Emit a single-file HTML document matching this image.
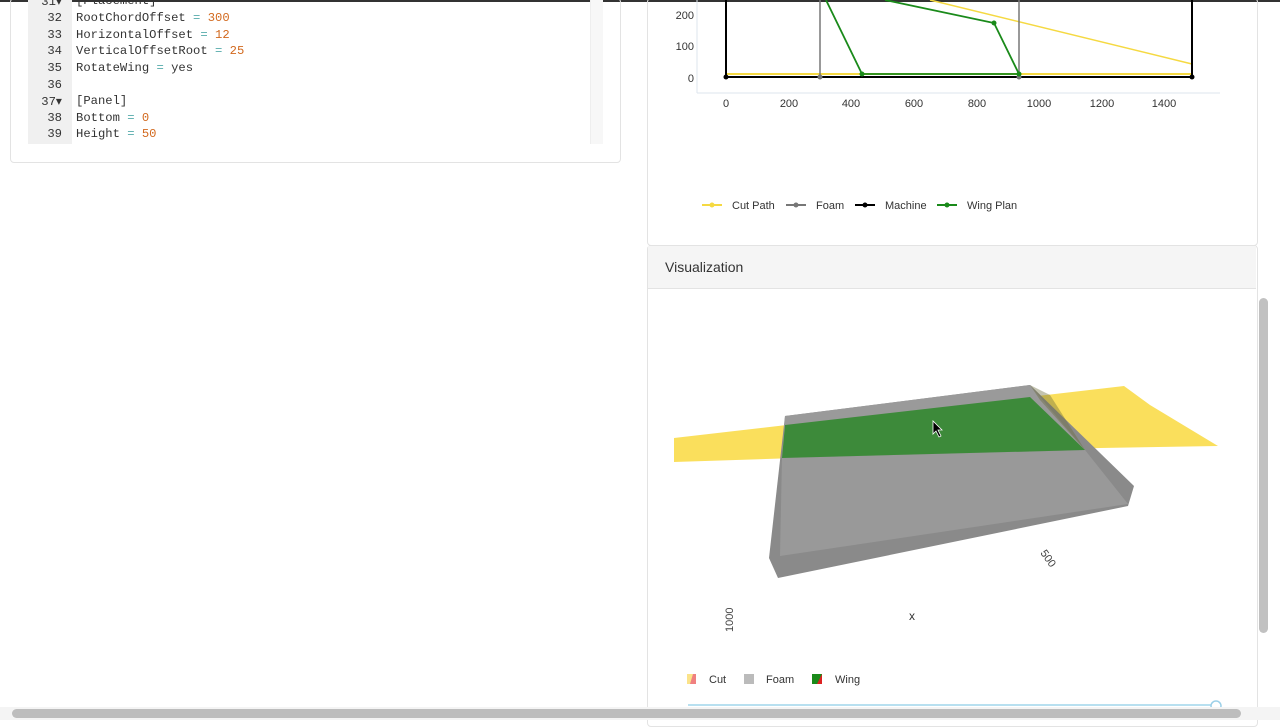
<!DOCTYPE html>
<html><head><style>
body{margin:0;width:1280px;height:720px;overflow:hidden;background:#fff;font-family:"Liberation Sans",sans-serif;position:relative}
.code{position:absolute;left:28px;top:0;width:574px;height:144px;font-family:"Liberation Mono",monospace;font-size:12.2px}
.gut{position:absolute;left:0;top:0;width:44px;height:144px;background:#f0f0f0}
.ln{position:absolute;left:0;width:34px;text-align:right;color:#333}
.tx{position:absolute;left:48px;color:#333;white-space:pre}
.n{color:#d2691e}.o{color:#5aa}
</style></head><body>
<div style="position:absolute;left:0;top:0;width:1280px;height:2px;background:#333"></div>
<div style="position:absolute;left:10px;top:-2px;width:609px;height:163px;border:1px solid #e3e3e3;border-radius:4px"></div>
<div class="code">
<div class="gut"></div>
<div style="position:absolute;left:562px;top:0;width:12px;height:144px;background:#f7f7f7;border-left:1px solid #eee"></div>
<div class="ln" style="top:-6px">31▾</div><div class="tx" style="top:-6px">[Placement]</div>
<div class="ln" style="top:11px">32</div><div class="tx" style="top:11px">RootChordOffset <span class="o">=</span> <span class="n">300</span></div>
<div class="ln" style="top:28px">33</div><div class="tx" style="top:28px">HorizontalOffset <span class="o">=</span> <span class="n">12</span></div>
<div class="ln" style="top:44px">34</div><div class="tx" style="top:44px">VerticalOffsetRoot <span class="o">=</span> <span class="n">25</span></div>
<div class="ln" style="top:61px">35</div><div class="tx" style="top:61px">RotateWing <span class="o">=</span> yes</div>
<div class="ln" style="top:78px">36</div>
<div class="ln" style="top:94px">37▾</div><div class="tx" style="top:94px">[Panel]</div>
<div class="ln" style="top:111px">38</div><div class="tx" style="top:111px">Bottom <span class="o">=</span> <span class="n">0</span></div>
<div class="ln" style="top:127px">39</div><div class="tx" style="top:127px">Height <span class="o">=</span> <span class="n">50</span></div>
</div>
<div style="position:absolute;left:647px;top:-2px;width:609px;height:246px;border:1px solid #e3e3e3;border-radius:4px"></div>
<svg style="position:absolute;left:0;top:0" width="1280" height="720" font-family="Liberation Sans,sans-serif">
<g font-size="11" fill="#333" text-anchor="end"><text x="694" y="19">200</text><text x="694" y="50">100</text><text x="694" y="82">0</text></g>
<g font-size="11" fill="#333" text-anchor="middle"><text x="726" y="107">0</text><text x="789" y="107">200</text><text x="851" y="107">400</text><text x="914" y="107">600</text><text x="977" y="107">800</text><text x="1039" y="107">1000</text><text x="1102" y="107">1200</text><text x="1164" y="107">1400</text></g>
<line x1="697" y1="0" x2="697" y2="93" stroke="#dde4ee"/><line x1="697" y1="93" x2="1220" y2="93" stroke="#dde4ee"/>
<polyline points="726,74 1192,74" stroke="#f5d942" stroke-width="2" fill="none"/>
<polyline points="930,0 1192,64" stroke="#f5d942" stroke-width="1.5" fill="none"/>
<line x1="820" y1="0" x2="820" y2="77" stroke="#777" stroke-width="1.5"/><line x1="1019" y1="0" x2="1019" y2="77" stroke="#777" stroke-width="1.5"/>
<polyline points="726,0 726,77 1192,77 1192,0" stroke="#000" stroke-width="2" fill="none"/>
<g fill="#000"><circle cx="726" cy="77" r="2.5"/><circle cx="1192" cy="77" r="2.5"/></g>
<g fill="#777"><circle cx="820" cy="77" r="2.5"/><circle cx="1019" cy="77" r="2.5"/></g>
<polyline points="826,0 862,74 1019,74 994,23 885,0" stroke="#1a8a1a" stroke-width="1.8" fill="none"/>
<g fill="#1a8a1a"><circle cx="862" cy="74" r="2.5"/><circle cx="1019" cy="74" r="2.5"/><circle cx="994" cy="23" r="2.5"/></g>
<g font-size="11" fill="#333">
<line x1="702" y1="205" x2="722" y2="205" stroke="#f5d942" stroke-width="2"/><circle cx="712" cy="205" r="2.5" fill="#f5d942"/><text x="732" y="209">Cut Path</text>
<line x1="786" y1="205" x2="806" y2="205" stroke="#777" stroke-width="2"/><circle cx="796" cy="205" r="2.5" fill="#777"/><text x="816" y="209">Foam</text>
<line x1="855" y1="205" x2="875" y2="205" stroke="#000" stroke-width="2"/><circle cx="865" cy="205" r="2.5" fill="#000"/><text x="885" y="209">Machine</text>
<line x1="937" y1="205" x2="957" y2="205" stroke="#1a8a1a" stroke-width="2"/><circle cx="947" cy="205" r="2.5" fill="#1a8a1a"/><text x="967" y="209">Wing Plan</text>
</g>
</svg>
<div style="position:absolute;left:647px;top:245px;width:609px;height:480px;border:1px solid #e3e3e3;border-radius:4px"></div>
<div style="position:absolute;left:648px;top:246px;width:608px;height:42px;background:#f5f5f5;border-bottom:1px solid #e3e3e3;font-size:14px;color:#333;line-height:42px;text-indent:17px">Visualization</div>
<svg style="position:absolute;left:0;top:0" width="1280" height="720" font-family="Liberation Sans,sans-serif">
<polygon points="674,438 1124,386 1150,405 1218,446 1100,448 674,462" fill="#f9dc4a" opacity="0.9"/>
<polygon points="785,416 1030,385 1134,486 1128,506 778,578 769,558" fill="#8a8a8a"/>
<polygon points="785,416 1030,385 1085,450 782,458" fill="#9a9a9a"/>
<polygon points="782,458 1085,450 1128,504 780,556" fill="#999"/>
<polygon points="785,425 1030,397 1085,450 782,458" fill="#3d8a3a"/>
<polygon points="1030,385 1050,395 1085,450 1040,400" fill="#6a6a3a" opacity="0.4"/>
<path d="M933,421 L933,434 L936,431 L939,437 L941,436 L938,430 L942,430 Z" fill="#000" stroke="#fff" stroke-width="0.8"/>
<text x="1040" y="553" font-size="11" fill="#444" transform="rotate(55 1040 553)">500</text>
<text x="733" y="632" font-size="11" fill="#444" transform="rotate(-90 733 632)">1000</text>
<text x="909" y="620" font-size="12" fill="#333">x</text>
<g font-size="11" fill="#333">
<rect x="687" y="674" width="9" height="10" fill="#fbe38a"/><polygon points="693,674 696,674 696,684 690,684" fill="#f08080"/><text x="709" y="683">Cut</text>
<rect x="744" y="674" width="10" height="10" fill="#bbb"/><text x="766" y="683">Foam</text>
<rect x="812" y="674" width="10" height="10" fill="#1a8a1a"/><polygon points="822,674 822,684 817,684" fill="#d22"/><text x="835" y="683">Wing</text>
</g>
<line x1="688" y1="705" x2="1214" y2="705" stroke="#b8e0f0" stroke-width="2"/>
<circle cx="1216" cy="706" r="5" fill="#fff" stroke="#9cd0e8" stroke-width="1.5"/>
</svg>
<div style="position:absolute;left:1259px;top:298px;width:9px;height:335px;background:#c1c1c1;border-radius:5px"></div>
<div style="position:absolute;left:0;top:707px;width:1280px;height:13px;background:#f4f4f4"></div>
<div style="position:absolute;left:12px;top:709px;width:1229px;height:9px;background:#bdbdbd;border-radius:5px"></div>
</body></html>
